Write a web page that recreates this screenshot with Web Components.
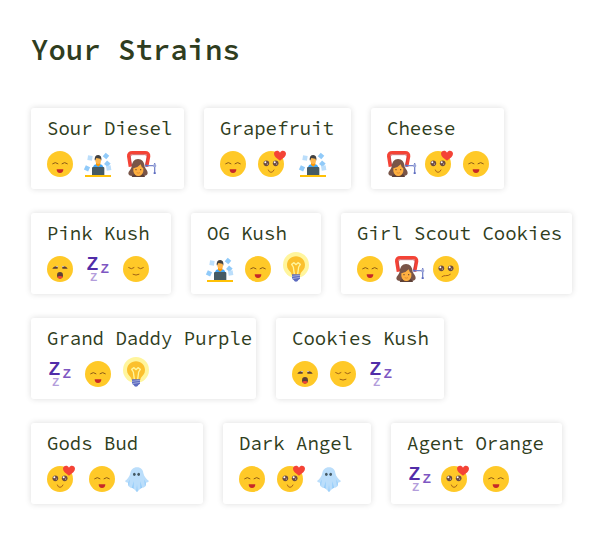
<!DOCTYPE html>
<html lang="en">
<head>
<meta charset="utf-8">
<title>Your Strains</title>
<style>
  body { margin: 0; background: #fff; color: #2f3d20; font-family: "Source Code Pro", "Liberation Mono", monospace; }
</style>
</head>
<body>
<strain-page>
  <span slot="title">Your Strains</span>
  <strain-card name="Sour Diesel" style="--basis:153px"><effect-icon kind="happy"></effect-icon><effect-icon kind="focus"></effect-icon><effect-icon kind="relief" space="wide"></effect-icon></strain-card>
  <strain-card name="Grapefruit" style="--basis:147px"><effect-icon kind="happy"></effect-icon><effect-icon kind="love"></effect-icon><effect-icon kind="focus" space="wide"></effect-icon></strain-card>
  <strain-card name="Cheese" style="--basis:133px"><effect-icon kind="relief"></effect-icon><effect-icon kind="love"></effect-icon><effect-icon kind="happy"></effect-icon></strain-card>
  <strain-card name="Pink Kush" style="--basis:140px"><effect-icon kind="yawn"></effect-icon><effect-icon kind="sleep"></effect-icon><effect-icon kind="calm"></effect-icon></strain-card>
  <strain-card name="OG Kush" style="--basis:130px"><effect-icon kind="focus"></effect-icon><effect-icon kind="happy"></effect-icon><effect-icon kind="idea"></effect-icon></strain-card>
  <strain-card name="Girl Scout Cookies" style="--basis:231px"><effect-icon kind="happy"></effect-icon><effect-icon kind="relief"></effect-icon><effect-icon kind="unsure"></effect-icon></strain-card>
  <strain-card name="Grand Daddy Purple" style="--basis:225px"><effect-icon kind="sleep"></effect-icon><effect-icon kind="happy"></effect-icon><effect-icon kind="idea"></effect-icon></strain-card>
  <strain-card name="Cookies Kush" style="--basis:168px"><effect-icon kind="yawn"></effect-icon><effect-icon kind="calm"></effect-icon><effect-icon kind="sleep"></effect-icon></strain-card>
  <strain-card name="Gods Bud" style="--basis:172px"><effect-icon kind="love"></effect-icon><effect-icon kind="happy" space="wide"></effect-icon><effect-icon kind="ghost" space="tight"></effect-icon></strain-card>
  <strain-card name="Dark Angel" style="--basis:148px"><effect-icon kind="happy"></effect-icon><effect-icon kind="love"></effect-icon><effect-icon kind="ghost"></effect-icon></strain-card>
  <strain-card name="Agent Orange" style="--basis:171px"><effect-icon kind="sleep"></effect-icon><effect-icon kind="love" space="tight"></effect-icon><effect-icon kind="happy" space="wide"></effect-icon></strain-card>
</strain-page>

<template id="page">
  <style>
    :host { display: block; padding: 30px 24px 28px 31px; }
    h1 { margin: 0 0 38px; font-size: 29px; line-height: 40px; font-weight: 600; }
    main { display: flex; flex-wrap: wrap; gap: 24px 20px; }
  </style>
  <h1><slot name="title"></slot></h1>
  <main><slot></slot></main>
</template>

<template id="card">
  <style>
    :host { display: block; box-sizing: border-box; flex: 0 0 var(--basis, auto); min-width: max-content;
      padding: 8px 0 12px 16px; background: #fff; border-radius: 3px; box-shadow: 0 0 6px rgba(0,0,0,.14); }
    h2 { margin: 0 0 11px; font-size: 19px; line-height: 24px; font-weight: 400; white-space: nowrap; }
    div { display: flex; gap: 12px; height: 26px; align-items: flex-end; }
  </style>
  <h2></h2>
  <div><slot></slot></div>
</template>

<script>
const disc = '<circle cx="39" cy="39" r="39" fill="#ffc928"/>';
const eyes = '<g fill="#6d4c41"><circle cx="25" cy="37" r="8.5"/><circle cx="53" cy="37" r="8.5"/></g><g fill="#fff"><circle cx="22" cy="34" r="3"/><circle cx="50" cy="34" r="3"/><circle cx="28" cy="39" r="1.5"/><circle cx="56" cy="39" r="1.5"/></g>';
const paper = (x, y, a, c) => `<rect x="-7" y="-7" width="14" height="14" fill="${c}" transform="translate(${x} ${y}) rotate(${a})"/>`;
const ICONS = {
  happy: ['Happy', 78, 78, disc + '<path d="M17 38q8-7 16 0M45 38q8-7 16 0" fill="none" stroke="#8a5a18" stroke-width="3" stroke-linecap="round"/><path d="M29 55h20q0 11-10 11t-10-11z" fill="#c62828"/>'],
  love: ['Loved', 84, 78, disc + eyes + '<path d="M31 57q2 7 8 7t9-7" fill="none" stroke="#a8651a" stroke-width="3" stroke-linecap="round"/><path d="M66 29C55 21 48 15 48 8c0-9 13-13 18-3 5-10 18-6 18 3 0 7-7 13-18 21z" fill="#f44336"/>'],
  unsure: ['Unsure', 78, 78, disc + eyes + '<path d="M27 62q6-4 11-3 8 1 14-4" fill="none" stroke="#a8651a" stroke-width="3" stroke-linecap="round"/>'],
  calm: ['Calm', 78, 78, disc + '<path d="M17 35q8 7 16 0M45 35q8 7 16 0M30 55q9 5 18 0" fill="none" stroke="#a06316" stroke-width="3" stroke-linecap="round"/>'],
  yawn: ['Drowsy', 78, 78, disc + '<path d="M16 38q4-8 16-8v8zM46 30q12 0 16 8H46z" fill="#5d4037"/><path d="M25 33l7-4v4zM46 29l7 4h-7z" fill="#ede7f6"/><ellipse cx="39" cy="58" rx="9" ry="10" fill="#5d4037"/><path d="M31 62q8-4 16 0-2 6-8 6t-8-6z" fill="#f44336"/>'],
  sleep: ['Sleepy', 78, 78, '<g font-family="Liberation Sans,sans-serif" font-weight="700"><text x="5" y="43" font-size="56" fill="#512da8">Z</text><text x="47" y="52" font-size="40" fill="#7e57c2">Z</text><text x="16" y="75" font-size="34" fill="#b39ddb">Z</text></g>'],
  focus: ['Focused', 78, 78,
    paper(15, 21, 9, '#bbdefb') + paper(63, 15, 40, '#90caf9') + paper(67, 38, 40, '#90caf9') + paper(71, 51, -10, '#bbdefb') + paper(6, 52, 25, '#90caf9') +
    '<path d="M24 50q1-9 10-10h11q9 1 10 10z" fill="#42a5f5"/><path d="M33 34h13v7l-6.500 6-6.500-6z" fill="#ff9800"/><ellipse cx="39.500" cy="28" rx="8.500" ry="11" fill="#ffb74d"/><path d="M29 28q-1-16 11-16 11 1 9 17l-3-6-12-2-3 7z" fill="#424242"/><path d="M21 51q0-3 3-3h31q3 0 3 3v21H21z" fill="#455a64"/><path d="M0 72h78v6H0z" fill="#ffc107"/>'],
  relief: ['Relieved', 90, 78,
    '<path d="M10 47L5 16Q4 5 16 5h38q12 0 11 11l-6 31" fill="none" stroke="#f44336" stroke-width="10"/><path d="M14 45l-4-27q-1-7 7-7h36q8 0 7 7l-5 27" fill="none" stroke="#b92c32" stroke-width="2"/><path d="M33 24c12 0 19 9 20 23 3 7 10 13 9 20-1 6-6 8-12 8H16C8 75 4 72 4 67c0-7 9-12 10-20 1-14 8-23 19-23z" fill="#795548"/><path d="M14 78q3-9 11-9h17q10 0 12 9z" fill="#5d4037"/><path d="M19 52q14-2 22-12 2 9 8 12v9q-3 14-15 14T19 61z" fill="#ffb040"/><g fill="#5d4037"><circle cx="27" cy="56" r="2"/><circle cx="41" cy="56" r="2"/></g><path d="M29 65q5 3 10 0" fill="none" stroke="#d17c24" stroke-width="2"/><path d="M54 44h28M83 36v32" stroke="#7986cb" stroke-width="4"/><circle cx="83" cy="44" r="5" fill="#9fa8da"/><path d="M80 64h6v5h-6zM56 39l7 5-7 5z" fill="#5c6bc0"/>'],
  idea: ['Inspired', 78, 90,
    '<circle cx="39" cy="39" r="39" fill="#fff59d"/><path d="M39 13c15 0 27 12 27 26 0 11-6 16-11 22-2 3-3 6-3 8H26c0-2-1-5-3-8-5-6-11-11-11-22 0-14 12-26 27-26z" fill="#fbc02d"/><path d="M34 67l-3-22-5-8 7-5 6 6 6-6 7 5-5 8-3 22" fill="none" stroke="#fff59d" stroke-width="4" stroke-linejoin="round"/><path d="M27 67h24v13l-5 4q-2 5-7 5t-7-5l-5-4z" fill="#5c6bc0"/><path d="M27 73l24-3M27 80l24-4" stroke="#9fa8da" stroke-width="3"/>'],
  ghost: ['Spooky', 78, 78,
    '<path d="M42 4c12 0 18 8 19 17 2 11 9 18 17 24-2 4-6 5-9 5 0 10-4 15-11 15-4 0-6 3-9 6l-7 7-7-7c-3-3-5-5-9-5-7-1-10-7-11-16-4 0-7-1-9-5 8-6 14-13 16-24C24 12 30 4 42 4z" fill="#bbdefb"/><path d="M20 40l-4 10q-1 8 2 12zM64 40l4 10q1 8-2 12zM32 45l-5 20 5 3zM52 45l5 20-5 3zM42 55l-2 20 2 3 2-3z" fill="#90caf9"/><g fill="#455a64"><ellipse cx="34" cy="25" rx="4" ry="5"/><ellipse cx="47" cy="25" rx="4" ry="5"/></g>']
};

class StrainPage extends HTMLElement {
  constructor() {
    super();
    this.attachShadow({ mode: 'open' }).append(document.getElementById('page').content.cloneNode(true));
  }
}
class StrainCard extends HTMLElement {
  constructor() {
    super();
    this.attachShadow({ mode: 'open' }).append(document.getElementById('card').content.cloneNode(true));
  }
  connectedCallback() {
    this.shadowRoot.querySelector('h2').textContent = this.getAttribute('name');
  }
}
class EffectIcon extends HTMLElement {
  connectedCallback() {
    if (this.shadowRoot) return;
    const [label, w, h, art] = ICONS[this.getAttribute('kind')];
    this.attachShadow({ mode: 'open' }).innerHTML = `<style>
      :host { display: flex; align-items: flex-end; flex: none; width: 26px; height: 26px; }
      :host([space="wide"]) { margin-left: 4px; }
      :host([space="tight"]) { margin-left: -4px; }
      svg { flex: none; overflow: visible; }
    </style><svg role="img" aria-label="${label}" width="${w / 3}" height="${h / 3}" viewBox="0 0 ${w} ${h}">${art}</svg>`;
  }
}
customElements.define('strain-page', StrainPage);
customElements.define('strain-card', StrainCard);
customElements.define('effect-icon', EffectIcon);
</script>
</body>
</html>
